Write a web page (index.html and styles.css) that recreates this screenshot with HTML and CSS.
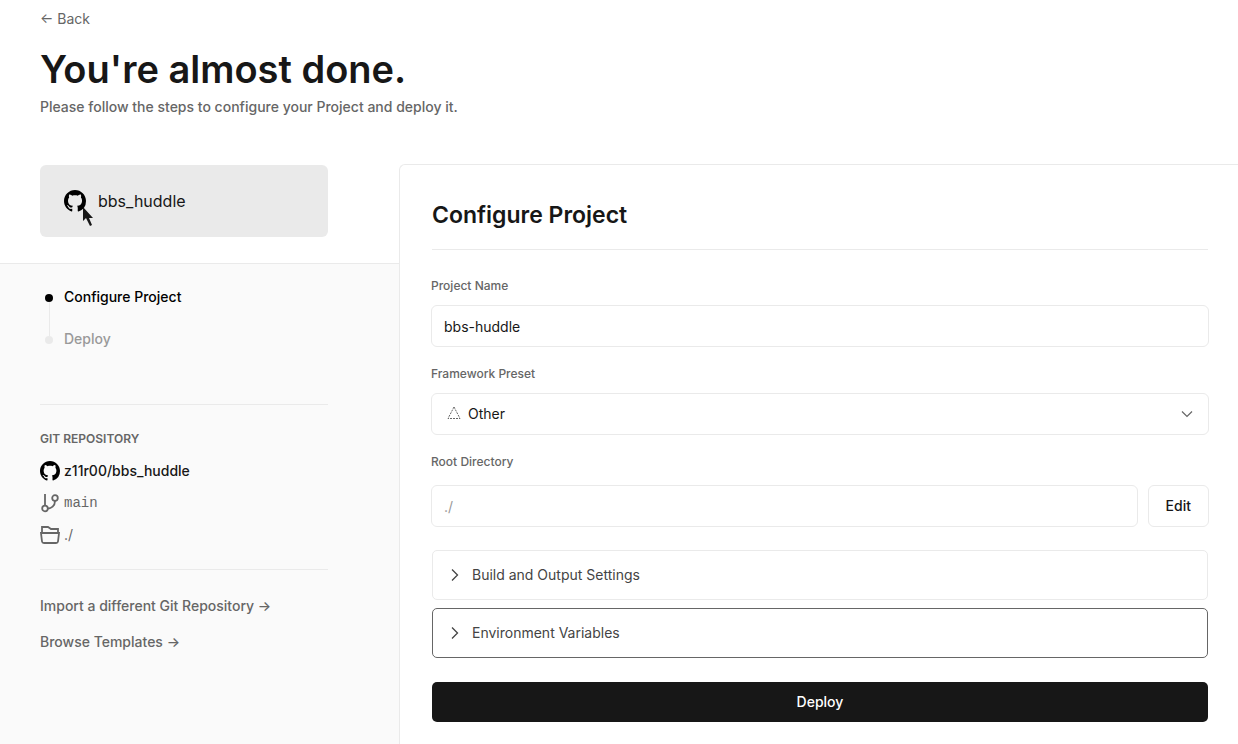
FILE: index.html
```html
<!DOCTYPE html>
<html lang="en">
<head>
<meta charset="utf-8">
<title>Configure Project</title>
<meta name="viewport" content="width=device-width, initial-scale=1">
<link rel="stylesheet" href="styles.css">
</head>
<body class="page">
<svg class="symbols" aria-hidden="true">
  <symbol id="github" viewBox="0 0 16 16"><path fill-rule="evenodd" d="M8 0C3.58 0 0 3.58 0 8c0 3.54 2.29 6.53 5.47 7.59.4.07.55-.17.55-.38 0-.19-.01-.82-.01-1.49-2.01.37-2.53-.49-2.69-.94-.09-.23-.48-.94-.82-1.13-.28-.15-.68-.52-.01-.53.63-.01 1.08.58 1.23.82.72 1.21 1.87.87 2.33.66.07-.52.28-.87.51-1.07-1.78-.2-3.64-.89-3.64-3.95 0-.87.31-1.59.82-2.15-.08-.2-.36-1.02.08-2.12 0 0 .67-.21 2.2.82.64-.18 1.32-.27 2-.27s1.36.09 2 .27c1.53-1.04 2.2-.82 2.2-.82.44 1.1.16 1.92.08 2.12.51.56.82 1.27.82 2.15 0 3.07-1.87 3.75-3.65 3.95.29.25.54.73.54 1.48 0 1.07-.01 1.93-.01 2.2 0 .21.15.46.55.38A8.01 8.01 0 0 0 16 8c0-4.42-3.58-8-8-8z"/></symbol>
  <symbol id="chevron" viewBox="0 0 16 16"><path d="M5 2.500 10.500 8 5 13.500" fill="none" stroke="currentColor" stroke-width="1.3"/></symbol>
  <symbol id="chevron-down" viewBox="0 0 16 16"><path d="M3 5.500l5 5 5-5" fill="none" stroke="currentColor" stroke-width="1.2"/></symbol>
</svg>
<header class="intro">
  <a class="back" href="#">← Back</a>
  <h1 class="title">You're almost done.</h1>
  <p class="lead">Please follow the steps to configure your Project and deploy it.</p>
</header>
<div class="columns">
  <aside class="sidebar">
    <div class="repo-area">
      <div class="repo-card">
        <span class="repo-logo">
          <svg class="logo-large" aria-hidden="true"><use href="#github"/></svg>
          <svg class="pointer" viewBox="0 0 10 19" aria-hidden="true"><path d="M0 0v14l3-3 4 8 2-1-3-7h4z"/></svg>
        </span>
        <span>bbs_huddle</span>
      </div>
    </div>
    <div class="details">
      <ol class="steps">
        <li class="step step-current">Configure Project</li>
        <li class="step">Deploy</li>
      </ol>
      <section class="git">
        <h2 class="git-title">GIT REPOSITORY</h2>
        <ul class="git-list">
          <li class="git-row"><svg class="icon logo" aria-hidden="true"><use href="#github"/></svg><a class="repo-link" href="#">z11r00/bbs_huddle</a></li>
          <li class="git-row"><svg class="icon" viewBox="0 0 20 20" aria-hidden="true"><path d="M5 1v12M15 8c0 5-4 7.500-7 7.500"/><circle cx="15" cy="5" r="2.800"/><circle cx="5" cy="15.500" r="2.800"/></svg><span class="branch">main</span></li>
          <li class="git-row"><svg class="icon" viewBox="0 0 20 20" aria-hidden="true"><path d="M2 8V2h6l3 2h7v4M1 8h18l-1 8.500q-.2 1.500-2 1.500H4q-1.800 0-2-1.500z"/></svg><span>./</span></li>
        </ul>
      </section>
      <nav class="links">
        <a class="link" href="#">Import a different Git Repository →</a>
        <a class="link" href="#">Browse Templates →</a>
      </nav>
    </div>
  </aside>
  <main class="panel">
    <h2 class="panel-title">Configure Project</h2>
    <form class="form">
      <div class="field">
        <label class="label" for="name">Project Name</label>
        <input class="control" id="name" type="text" value="bbs-huddle">
      </div>
      <div class="field">
        <label class="label" for="preset">Framework Preset</label>
        <div class="select-box">
          <select class="control select" id="preset"><option>Other</option></select>
          <svg class="preset-icon" viewBox="0 0 14 14" aria-hidden="true"><path d="M7 1 1 12.500h12z"/></svg>
          <svg class="select-arrow" aria-hidden="true"><use href="#chevron-down"/></svg>
        </div>
      </div>
      <div class="field field-root">
        <label class="label" for="root">Root Directory</label>
        <div class="root-row">
          <input class="control muted" id="root" type="text" value="./" readonly>
          <button class="edit" type="button">Edit</button>
        </div>
      </div>
      <div class="groups">
        <button class="group" type="button" aria-expanded="false"><svg class="group-arrow" aria-hidden="true"><use href="#chevron"/></svg>Build and Output Settings</button>
        <button class="group group-active" type="button" aria-expanded="false"><svg class="group-arrow" aria-hidden="true"><use href="#chevron"/></svg>Environment Variables</button>
      </div>
      <button class="deploy" type="submit">Deploy</button>
    </form>
  </main>
</div>
</body>
</html>
```
FILE: styles.css
```css
* { box-sizing: border-box; }
.page {
  margin: 0;
  min-height: 100vh;
  display: flex;
  flex-direction: column;
  background: #fff;
  color: #171717;
  font: 14px/20px Inter, "Liberation Sans", sans-serif;
}
.symbols { display: none; }
a { color: inherit; text-decoration: none; }
h1, h2, p, ol, ul { margin: 0; padding: 0; list-style: none; }
button, input, select { font: inherit; color: inherit; }

.intro { padding: 9px 40px 47px; color: #666; }
.back { display: inline-block; }
.title { margin-top: 16px; font-size: 38px; line-height: 48px; font-weight: 600; color: #171717; }
.lead { margin-top: 4px; font-weight: 500; }

.columns { flex: 1; display: grid; grid-template-columns: 399px 1fr; }
.sidebar { display: flex; flex-direction: column; }
.repo-area { padding: 1px 71px 26px 40px; border-bottom: 1px solid #eaeaea; }
.repo-card {
  display: flex;
  align-items: center;
  gap: 12px;
  height: 72px;
  padding: 0 24px;
  border-radius: 6px;
  background: #eaeaea;
  font-size: 16px;
}
.repo-logo { position: relative; display: flex; }
.logo-large { width: 22px; height: 22px; }
.pointer { position: absolute; left: 19px; top: 17px; width: 10px; height: 19px; fill: #171717; }

.details { flex: 1; padding: 23px 71px 40px 40px; background: #fafafa; color: #666; }
.steps { display: grid; gap: 22px; padding-bottom: 55px; border-bottom: 1px solid #eaeaea; }
.step { position: relative; padding-left: 24px; font-weight: 500; color: #999; }
.step::before {
  content: "";
  position: absolute;
  left: 5px;
  top: 7px;
  width: 8px;
  height: 8px;
  border-radius: 50%;
  background: #eaeaea;
}
.step-current { color: #000; }
.step-current::before { background: #000; }
.step-current::after {
  content: "";
  position: absolute;
  left: 9px;
  top: 15px;
  width: 1px;
  height: 34px;
  background: #eaeaea;
}
.git { padding: 24px 0 18px; border-bottom: 1px solid #eaeaea; }
.git-title { font-size: 12px; line-height: 20px; font-weight: 600; }
.git-list { padding-top: 6px; }
.git-row { display: flex; align-items: center; gap: 4px; height: 32px; }
.icon { width: 20px; height: 20px; fill: none; stroke: #666; stroke-width: 1.8; }
.logo { fill: #000; stroke: none; }
.repo-link { color: #171717; font-weight: 500; }
.branch { font-family: "Liberation Mono", monospace; }
.links { display: grid; gap: 16px; padding-top: 26px; font-weight: 500; }

.panel {
  padding: 32px 30px 22px 32px;
  border: 1px solid #eaeaea;
  border-width: 1px 0 0 1px;
  border-radius: 6px 0 0 0;
  background: #fff;
}
.panel-title {
  padding-bottom: 16px;
  border-bottom: 1px solid #eaeaea;
  font-size: 23px;
  line-height: 36px;
  font-weight: 600;
}
.form { padding-top: 28px; }
.field { margin: 0 -1px 19px; }
.field-root { margin-bottom: 23px; }
.label { display: block; margin-bottom: 11px; font-size: 12px; line-height: 16px; font-weight: 500; color: #666; }
.control {
  display: block;
  width: 100%;
  height: 42px;
  padding: 0 12px;
  border: 1px solid #eaeaea;
  border-radius: 6px;
  background: #fff;
  outline: 0;
}
.muted { color: #999; }
.select-box { position: relative; }
.select { appearance: none; padding-left: 36px; }
.preset-icon { position: absolute; left: 16px; top: 13px; width: 14px; height: 14px; fill: none; stroke: #666; stroke-dasharray: 2 1; pointer-events: none; }
.select-arrow { position: absolute; right: 14px; top: 13px; width: 16px; height: 16px; color: #666; pointer-events: none; }
.root-row { display: flex; gap: 10px; padding-top: 4px; }
.edit { height: 42px; padding: 0 17px; border: 1px solid #eaeaea; border-radius: 6px; background: #fff; font-weight: 500; }
.groups { display: grid; gap: 8px; }
.group {
  display: flex;
  align-items: center;
  gap: 9px;
  height: 50px;
  padding: 0 14px;
  border: 1px solid #eaeaea;
  border-radius: 5px;
  background: #fff;
  color: #444;
  text-align: left;
}
.group-active { border-color: #666; }
.group-arrow { width: 16px; height: 16px; }
.deploy {
  display: block;
  width: 100%;
  height: 40px;
  margin-top: 24px;
  border: 0;
  border-radius: 5px;
  background: #171717;
  color: #fff;
  font-weight: 500;
}
```
